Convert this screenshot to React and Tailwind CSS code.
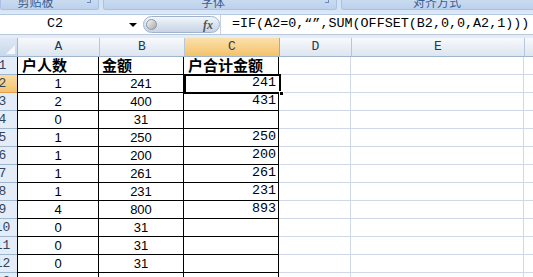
import React from 'react';

const MONO = { fontFamily: '"Liberation Mono", "Noto Sans CJK SC", monospace' };

const rows = [
  { a: '户人数', b: '金额', c: '户合计金额', head: true },
  { a: '1', b: '241', c: '241' },
  { a: '2', b: '400', c: '431' },
  { a: '0', b: '31', c: '' },
  { a: '1', b: '250', c: '250' },
  { a: '1', b: '200', c: '200' },
  { a: '1', b: '261', c: '261' },
  { a: '1', b: '231', c: '231' },
  { a: '4', b: '800', c: '893' },
  { a: '0', b: '31', c: '' },
  { a: '0', b: '31', c: '' },
  { a: '0', b: '31', c: '' },
  { a: '', b: '', c: '' },
];

const RibbonGroup = ({ label, className, launcher }) => (
  <div className={`relative h-full overflow-hidden rounded-b-[3px] bg-gradient-to-b from-[#c9dbf1] to-[#bcd1ec] border-b border-x border-[#a9c1e2] ${className}`}>
    <div className="-mt-[5px] text-center text-[12px] leading-[13px] text-[#3d5d93] font-['Noto_Sans_CJK_SC',sans-serif]">
      {label}
    </div>
    {launcher && (
      <div className="absolute right-[7px] top-0 w-[4px] h-[3px] border-r border-b border-[#6d8ab8]" />
    )}
  </div>
);

const ColHead = ({ label, w, active }) => (
  <div
    className={`${w} h-full flex items-center justify-center border-r text-[13px] ${
      active
        ? 'bg-gradient-to-b from-[#fbe0ab] to-[#f4c268] border-[#e2a04a] text-[#3b3b3b]'
        : 'bg-gradient-to-b from-[#f7f9fc] to-[#dde5ef] border-[#b7c7db] text-[#203a4f]'
    }`}
    style={MONO}
  >
    {label}
  </div>
);

export default function App() {
  return (
    <div className="relative w-[533px] h-[277px] overflow-hidden bg-white">
      {/* ribbon group captions, cut off at the top */}
      <div className="flex h-[10px] gap-[4px] bg-[#d5e2f3]">
        <RibbonGroup label="剪贴板" className="w-[99px] pr-[28px]" launcher />
        <RibbonGroup label="字体" className="w-[234px] pr-[14px]" launcher />
        <RibbonGroup label="对齐方式" className="flex-1 pr-[20px] -mr-[20px]" />
      </div>
      <div className="h-[5px] bg-gradient-to-b from-[#d7e4f4] to-[#dfe9f6] border-b border-[#b4c8e2]" />

      {/* formula bar */}
      <div className="flex h-[19px] bg-white items-center" style={MONO}>
        <div className="w-[143px] h-full flex items-center">
          <span className="pl-[47px] text-[13.4px] text-black">C2</span>
          <span className="ml-auto mr-[6px] w-0 h-0 border-x-[4px] border-x-transparent border-t-[4px] border-t-black" />
        </div>
        <div className="w-[77px] h-[17px] rounded-full bg-gradient-to-b from-[#f4f7fb] via-[#dbe4ef] to-[#c7d4e4] border border-[#9fb3cc] flex items-center px-[2px]">
          <div className="w-[11px] h-[11px] rounded-full bg-gradient-to-br from-[#f7f7f7] to-[#a9a9a9] border border-[#8a96a6]" />
          <span className="ml-auto mr-[4px] text-[12px] italic font-bold text-[#555] font-['Liberation_Serif',serif] leading-none">
            fx
          </span>
        </div>
        <div className="flex-1 h-full flex items-center pl-[11px] border-l border-[#c3d1e2] text-[13.4px] text-black whitespace-nowrap">
          =IF(A2=0,“”,SUM(OFFSET(B2,0,0,A2,1)))
        </div>
      </div>
      <div className="h-[4px] bg-[#e6ecf4] border-t border-[#b9c9dd]" />

      {/* column headers */}
      <div className="flex h-[19px] border-b border-[#9eb6ce]">
        <div className="w-[18px] h-full bg-gradient-to-b from-[#dfe8f5] to-[#c8d7ec] border-r border-[#9eb6ce] relative">
          <div className="absolute right-[2px] bottom-[2px] w-0 h-0 border-l-[9px] border-l-transparent border-b-[9px] border-b-[#f4f7fb]" />
        </div>
        <ColHead label="A" w="w-[82px]" />
        <ColHead label="B" w="w-[85px]" />
        <ColHead label="C" w="w-[95px]" active />
        <ColHead label="D" w="w-[72px]" />
        <ColHead label="E" w="w-[173px]" />
        <div className="flex-1 h-full bg-gradient-to-b from-[#f7f9fc] to-[#dde5ef]" />
      </div>

      {/* rows */}
      {rows.map((r, i) => {
        const n = i + 1;
        const sel = n === 2;
        return (
          <div key={n} className="flex h-[18px]">
            <div
              className={`w-[18px] h-full overflow-hidden border-b border-r ${
                sel
                  ? 'bg-gradient-to-b from-[#fbdca4] to-[#f4c36c] border-[#e2a04a]'
                  : 'bg-[#e4ecf7] border-[#9eb6ce]'
              }`}
            >
              <div className="w-[31px] -ml-[13px] h-full flex items-center justify-center text-[13px] text-[#30445f]" style={MONO}>
                {n}
              </div>
            </div>
            {r.head ? (
              <>
                <div className="w-[82px] h-full border-l border-r border-b border-black pl-[4px] flex items-center text-[15px] font-bold text-black font-['Noto_Sans_CJK_SC',sans-serif] -ml-px">
                  {r.a}
                </div>
                <div className="w-[85px] h-full border-r border-b border-black pl-[3px] flex items-center text-[15px] font-bold text-black font-['Noto_Sans_CJK_SC',sans-serif]">
                  {r.b}
                </div>
                <div className="w-[95px] h-full border-r border-b border-black pl-[4px] flex items-center text-[15px] font-bold text-black font-['Noto_Sans_CJK_SC',sans-serif] whitespace-nowrap">
                  {r.c}
                </div>
              </>
            ) : (
              <>
                <div className="w-[82px] h-full border-l border-r border-b border-black flex items-center justify-center text-[13px] text-black font-['Liberation_Sans',sans-serif] -ml-px">
                  {r.a}
                </div>
                <div className="w-[85px] h-full border-r border-b border-black flex items-center justify-center text-[13px] text-black font-['Liberation_Sans',sans-serif]">
                  {r.b}
                </div>
                <div className="w-[95px] h-full border-r border-b border-black flex items-center justify-end pr-[2px] text-[13.4px] text-black" style={MONO}>
                  {r.c}
                </div>
              </>
            )}
            <div className="w-[72px] h-full border-r border-b border-[#d0d7e5]" />
            <div className="w-[173px] h-full border-r border-b border-[#d0d7e5]" />
            <div className="flex-1 h-full border-b border-[#d0d7e5]" />
          </div>
        );
      })}

      {/* active cell C2 */}
      <div className="absolute left-[184px] top-[74px] w-[97px] h-[20px] border-2 border-black pointer-events-none">
        <div className="w-full h-full border border-white" />
      </div>
      <div className="absolute left-[279px] top-[91px] w-[5px] h-[5px] bg-black border border-white pointer-events-none" />
    </div>
  );
}
